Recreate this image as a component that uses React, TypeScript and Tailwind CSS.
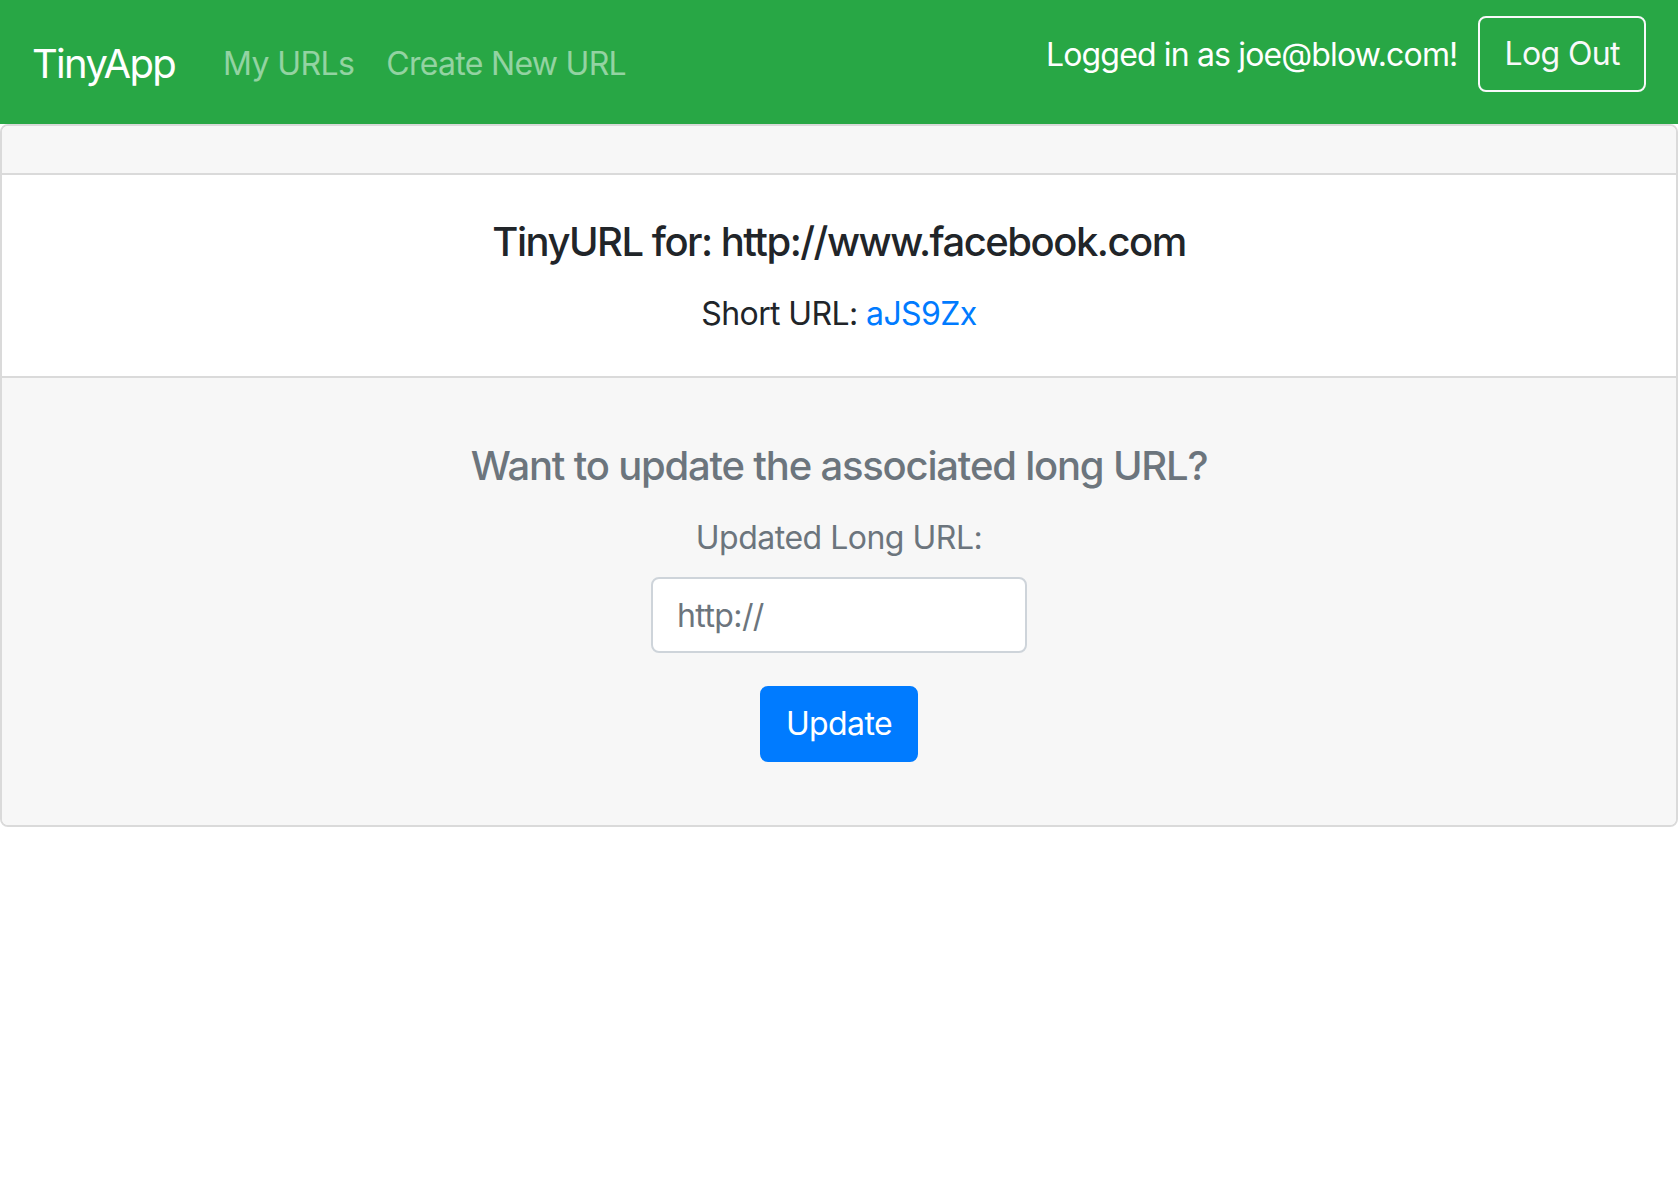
import React from 'react';

const font = { fontFamily: 'Inter, "Liberation Sans", sans-serif' };

function NavBar() {
  return (
    <nav className="flex h-[124px] items-center justify-between bg-[#28a745] px-8">
      <div className="mt-[4px] flex items-center">
        <a className="mr-8 py-[10px] text-[40px] leading-[60px] text-white tracking-[-1.7px]">TinyApp</a>
        <a className="px-4 py-4 text-[32px] leading-[48px] text-white/50 tracking-[-0.6px]">My URLs</a>
        <a className="px-4 py-4 text-[32px] leading-[48px] text-white/50 tracking-[-0.7px]">Create New URL</a>
      </div>
      <div className="mt-4 flex items-center gap-[21px] self-start">
        <span className="mt-[2px] text-[32px] leading-[48px] text-white tracking-[-0.85px]">Logged in as joe@blow.com!</span>
        <button className="rounded-lg border-2 border-[#f8f9fa] px-6 py-3 text-[32px] leading-[48px] text-[#f8f9fa] tracking-[-0.6px]">
          Log Out
        </button>
      </div>
    </nav>
  );
}

export default function App() {
  return (
    <div className="min-h-[1200px] bg-white" style={font}>
      <NavBar />
      <div className="overflow-hidden rounded-lg border-2 border-[#dadada]">
        <div className="h-[49px] border-b-2 border-[#dadada] bg-[#f7f7f7]" />
        <div className="flex flex-col items-center bg-white px-10 pt-[43px] pb-[38px] text-center">
          <h5 className="mb-6 text-[40px] font-medium leading-[48px] text-[#212529] tracking-[-1.5px]">
            TinyURL for: http://www.facebook.com
          </h5>
          <p className="text-[32px] leading-[48px] text-[#212529] tracking-[-0.6px]">
            Short URL: <a className="text-[#007bff]">aJS9Zx</a>
          </p>
        </div>
        <div className="flex flex-col items-center border-t-2 border-[#dadada] bg-[#f7f7f7] px-10 pt-[64px] pb-[63px] text-center">
          <h5 className="mb-[24px] text-[40px] font-medium leading-[48px] text-[#6c757d] tracking-[-1.2px]">
            Want to update the associated long URL?
          </h5>
          <label className="mb-[15px] text-[32px] leading-[48px] text-[#6c757d] tracking-[-0.5px]">Updated Long URL:</label>
          <input
            type="text"
            placeholder="http://"
            className="h-[76px] w-[376px] rounded-lg border-2 border-[#ced4da] bg-white px-6 text-[32px] text-[#495057] placeholder:text-[#6c757d] tracking-[-0.6px] outline-none"
          />
          <button className="mt-[33px] rounded-lg border-2 border-[#007bff] bg-[#007bff] px-6 py-3 text-[32px] leading-[48px] text-white tracking-[-0.6px]">
            Update
          </button>
        </div>
      </div>
    </div>
  );
}
